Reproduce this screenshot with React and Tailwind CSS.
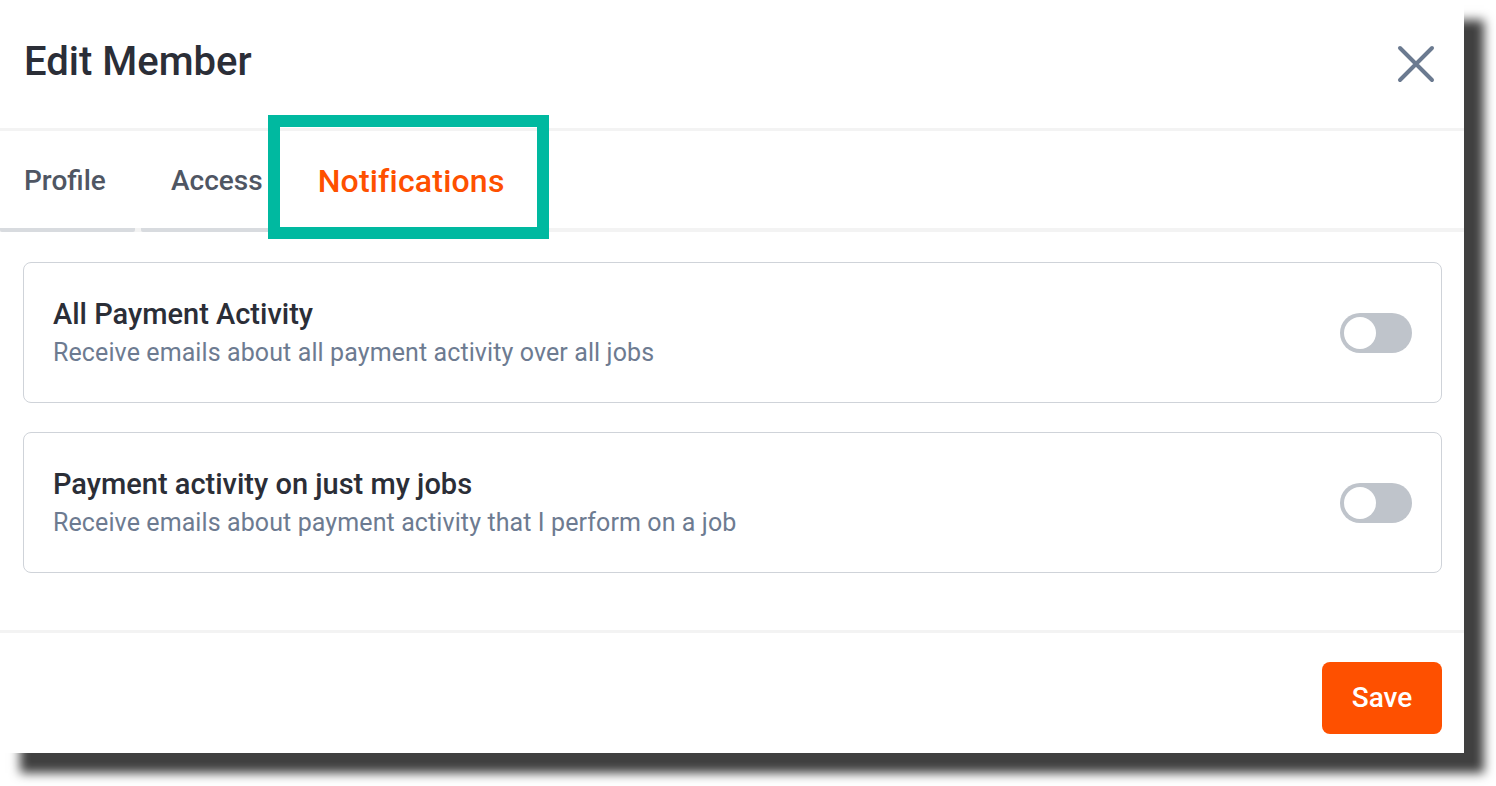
import React, { useState } from 'react'

const prefs = [
  {
    id: 'all',
    title: 'All Payment Activity',
    desc: 'Receive emails about all payment activity over all jobs',
  },
  {
    id: 'mine',
    title: 'Payment activity on just my jobs',
    desc: 'Receive emails about payment activity that I perform on a job',
  },
]

const Toggle = ({ on, onChange }) => (
  <button
    onClick={onChange}
    className={`w-[72px] h-[40px] rounded-full p-[4px] flex shrink-0 ${on ? 'bg-[#fe5000] justify-end' : 'bg-[#bfc4cb] justify-start'}`}
  >
    <span className='w-[32px] h-[32px] rounded-full bg-white block' />
  </button>
)

const App = () => {
  const [tab, setTab] = useState('notifications')
  const [settings, setSettings] = useState({ all: false, mine: false })

  const tabs = [
    { id: 'profile', label: 'Profile', cls: 'pl-6 pr-[29px] w-[135px]' },
    { id: 'access', label: 'Access', cls: 'pl-[30px] pr-[24px] ml-[6px]' },
  ]

  return (
    <main className="w-[1496px] h-[786px] bg-white font-['Roboto',sans-serif]">
      <div className='relative w-[1464px] h-[753px] bg-white shadow-[20px_20px_10px_0_#404040] flex flex-col'>
        {/* header */}
        <div className='h-[128px] flex items-center justify-between pl-6 pr-[28px] pb-[4px]'>
          <h1 className='text-[40px] font-medium text-[#2b2e37] leading-none'>Edit Member</h1>
          <button className='w-[40px] h-[40px] flex items-center justify-center mt-[4px]'>
            <svg width='40' height='40' viewBox='0 0 40 40' fill='none'>
              <path d='M4 4L36 36M36 4L4 36' stroke='#6b7a90' strokeWidth='4' strokeLinecap='round' />
            </svg>
          </button>
        </div>
        <div className='h-[3px] bg-[#f3f3f3]' />

        {/* tabs */}
        <div className='relative h-[101px] flex items-stretch border-b-4 border-[#f3f3f3]'>
          {tabs.map((t) => (
            <button
              key={t.id}
              onClick={() => setTab(t.id)}
              className={`relative flex items-center pt-[2px] text-[28px] font-medium text-[#4f5663] -mb-[4px] border-b-4 border-[#d8dbdf] rounded-b-[2px] ${t.cls}`}
            >
              {t.label}
            </button>
          ))}
          <button
            onClick={() => setTab('notifications')}
            className='flex items-center pl-[31px] pt-[2px] text-[32px] font-medium tracking-[0.2px] text-[#fe5000] -mb-[4px] border-b-4 border-[#fe5000]'
          >
            Notifications
          </button>
          {/* highlight frame */}
          <div className='absolute left-[268px] top-[-16px] w-[281px] h-[124px] border-[12px] border-[#00b9a0]' />
        </div>

        {/* preferences */}
        <div className='flex flex-col gap-[29px] pl-[23px] pr-[22px] pt-[30px] pb-[57px]'>
          {prefs.map((p) => (
            <div key={p.id} className='h-[141px] border border-[#cfd3d9] rounded-[8px] flex items-center justify-between pl-[29px] pr-[29px]'>
              <div className='flex flex-col'>
                <span className='text-[29px] font-medium text-[#2b2e37] leading-[34px]'>{p.title}</span>
                <span className='text-[25px] text-[#6d7b91] leading-[32px] mt-[6px] tracking-[0.1px]'>{p.desc}</span>
              </div>
              <Toggle
                on={settings[p.id]}
                onChange={() => setSettings({ ...settings, [p.id]: !settings[p.id] })}
              />
            </div>
          ))}
        </div>

        <div className='h-[3px] bg-[#f3f3f3]' />
        {/* footer */}
        <div className='flex justify-end pr-[22px] pt-[29px]'>
          <button className='w-[120px] h-[72px] rounded-[8px] bg-[#fe5000] text-white text-[28px] font-medium'>
            Save
          </button>
        </div>
      </div>
    </main>
  )
}

export default App
